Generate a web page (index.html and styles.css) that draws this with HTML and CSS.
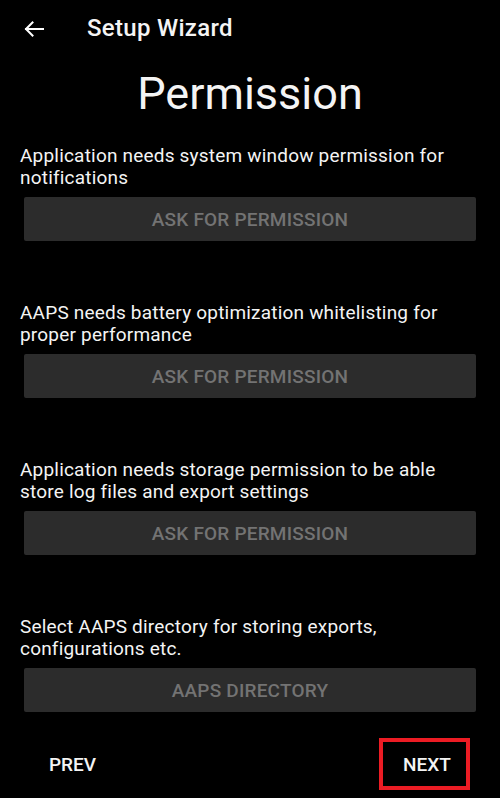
FILE: index.html
```html
<!DOCTYPE html>
<html>
<head>
<meta charset="utf-8">
<link rel="stylesheet" href="styles.css">
</head>
<body>
<div class="screen">
  <header class="toolbar">
    <span class="back">
      <svg width="20" height="16" viewBox="0 0 20 16"><path d="M19 8H2M8.5 1.5L2 8l6.5 6.5" fill="none" stroke="#fff" stroke-width="2" stroke-linecap="square"/></svg>
    </span>
    <span class="toolbar-title">Setup Wizard</span>
  </header>
  <h1 class="heading">Permission</h1>
  <main class="sections">
    <section class="item">
      <p class="desc">Application needs system window permission for notifications</p>
      <div class="btn">ASK FOR PERMISSION</div>
    </section>
    <section class="item">
      <p class="desc">AAPS needs battery optimization whitelisting for proper performance</p>
      <div class="btn">ASK FOR PERMISSION</div>
    </section>
    <section class="item">
      <p class="desc">Application needs storage permission to be able store log files and export settings</p>
      <div class="btn">ASK FOR PERMISSION</div>
    </section>
    <section class="item">
      <p class="desc">Select AAPS directory for storing exports, configurations etc.</p>
      <div class="btn">AAPS DIRECTORY</div>
    </section>
  </main>
  <footer class="footer">
    <span class="nav prev">PREV</span>
    <span class="nav next">NEXT</span>
  </footer>
</div>
</body>
</html>
```
FILE: styles.css
```css
html, body {
  margin: 0;
  padding: 0;
  background: #000;
}
body {
  font-family: Roboto, "Noto Sans", "Liberation Sans", sans-serif;
  color: #f4f4f4;
}
.screen {
  width: 500px;
  height: 798px;
  display: flex;
  flex-direction: column;
}
.toolbar {
  height: 56px;
  display: flex;
  align-items: center;
  padding-left: 24px;
}
.back {
  display: flex;
  width: 20px;
  height: 16px;
  margin-top: 2px;
}
.toolbar-title {
  margin-left: 43px;
  font-size: 24px;
  font-weight: 500;
  line-height: 28px;
  letter-spacing: 0.3px;
}
.heading {
  margin: 12px 0 0;
  font-size: 45px;
  font-weight: 400;
  line-height: 52px;
  text-align: center;
}
.sections {
  display: flex;
  flex-direction: column;
  gap: 61px;
  margin-top: 25px;
  padding: 0 20px;
}
.item {
  display: flex;
  flex-direction: column;
  gap: 8px;
}
.desc {
  margin: 0;
  font-size: 19px;
  line-height: 22px;
  letter-spacing: 0.2px;
}
.btn {
  margin: 0 4px;
  height: 44px;
  background: #2c2c2c;
  border-radius: 2px;
  color: #737373;
  font-size: 19px;
  font-weight: 500;
  letter-spacing: 0.2px;
  display: flex;
  align-items: center;
  justify-content: center;
}
.footer {
  margin-top: 26px;
  display: flex;
  justify-content: space-between;
  align-items: center;
  padding: 0 30px 0 29px;
}
.nav {
  font-size: 19px;
  font-weight: 500;
  color: #f4f4f4;
  height: 52px;
  box-sizing: border-box;
  display: flex;
  align-items: center;
  justify-content: center;
}
.prev {
  width: 87px;
}
.next {
  width: 91px;
  border: 4px solid #ec1c24;
  padding-left: 5px;
}
```
